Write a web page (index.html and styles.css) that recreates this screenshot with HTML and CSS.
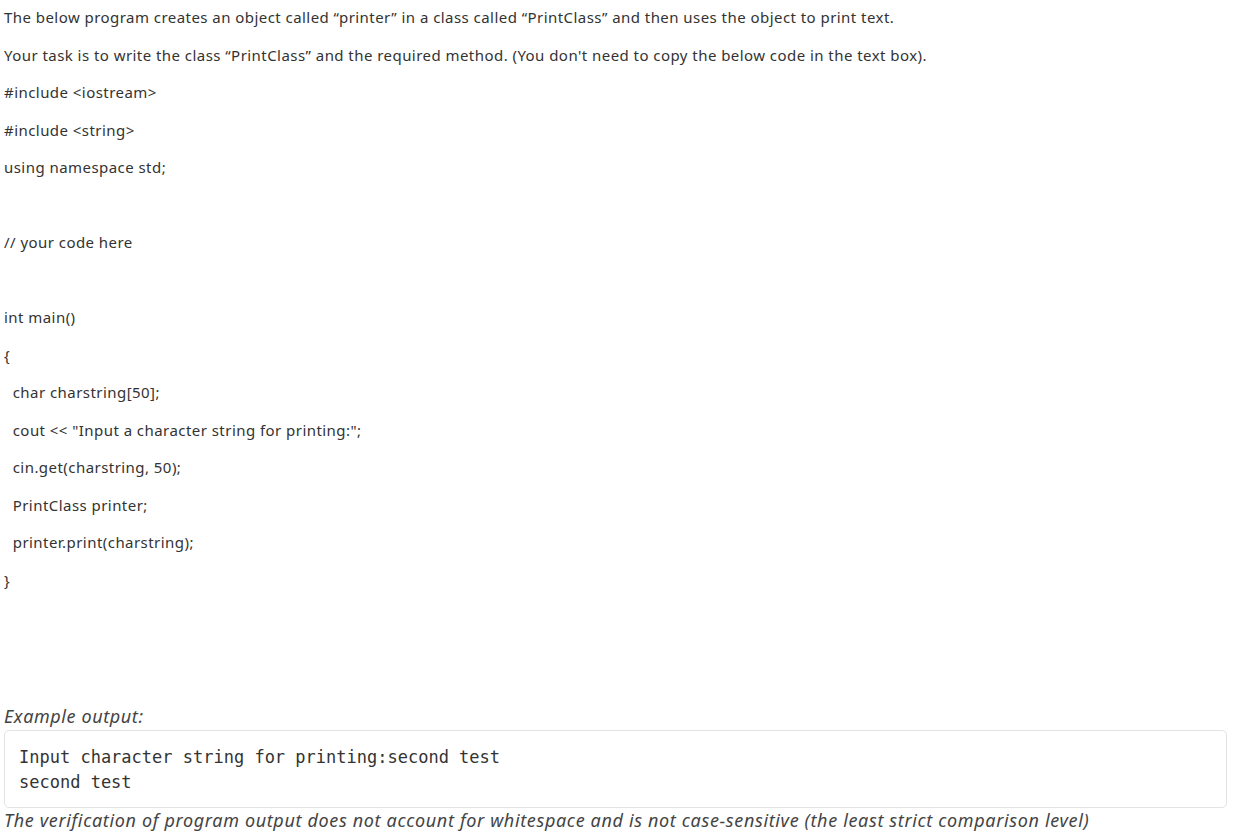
FILE: index.html
```html
<!DOCTYPE html>
<html>
<head>
<meta charset="utf-8">
<link rel="stylesheet" href="styles.css">
</head>
<body>
<div class="question">
  <p>The below program creates an object called “printer” in a class called “PrintClass” and then uses the object to print text.</p>
  <p>Your task is to write the class “PrintClass” and the required method. (You don't need to copy the below code in the text box).</p>
  <p>#include &lt;iostream&gt;</p>
  <p>#include &lt;string&gt;</p>
  <p>using namespace std;</p>
  <p>&nbsp;</p>
  <p>// your code here</p>
  <p>&nbsp;</p>
  <p>int main()</p>
  <p>{</p>
  <p>&nbsp; char charstring[50];</p>
  <p>&nbsp; cout &lt;&lt; "Input a character string for printing:";</p>
  <p>&nbsp; cin.get(charstring, 50);</p>
  <p>&nbsp; PrintClass printer;</p>
  <p>&nbsp; printer.print(charstring);</p>
  <p>}</p>
  <p>&nbsp;</p>
  <p>&nbsp;</p>
</div>
<div class="example">
  <div class="example-label">Example output:</div>
  <pre class="example-box">Input character string for printing:second test
second test</pre>
  <div class="note">The verification of program output does not account for whitespace and is not case-sensitive (the least strict comparison level)</div>
</div>
</body>
</html>
```
FILE: styles.css
```css
html, body {
  margin: 0;
  padding: 0;
  background: #ffffff;
}
body {
  padding: 0 6px 0 4px;
  font-family: "Noto Sans", "Open Sans", sans-serif;
  color: #333333;
}
.question {
  margin-top: -1px;
}
.question p {
  margin: 0;
  font-size: 15px;
  line-height: 37.5px;
  letter-spacing: 0.45px;
  white-space: pre-wrap;
}
.example {
  margin-top: 30px;
}
.example-label {
  font-style: italic;
  font-size: 18px;
  line-height: 24px;
  letter-spacing: 0.6px;
  color: #444444;
}
.example-box {
  margin: 2px 0 0 0;
  padding: 14px 14px 12px 14px;
  border: 1px solid #e3e3e3;
  border-radius: 5px;
  font-family: "DejaVu Sans Mono", "Liberation Mono", monospace;
  font-size: 17px;
  line-height: 25px;
  color: #333333;
  background: #ffffff;
}
.note {
  font-style: italic;
  font-size: 18px;
  line-height: 24px;
  letter-spacing: 0.65px;
  color: #444444;
}
```
